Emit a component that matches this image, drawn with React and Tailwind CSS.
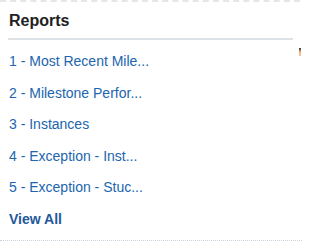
import React from "react";

const items = [
  "1 - Most Recent Mile...",
  "2 - Milestone Perfor...",
  "3 - Instances",
  "4 - Exception - Inst...",
  "5 - Exception - Stuc...",
];

export default function App() {
  return (
    <div className="w-[302px] h-[242px] bg-white relative overflow-hidden" style={{ fontFamily: '"Liberation Sans", Arial, sans-serif' }}>
      <div className="h-[2px] w-[300px] border-t-2 border-dashed border-[#e4e7ea]" />
      <div className="pl-[9px] pr-[9px]">
        <div className="h-[36px] flex items-center pt-[2px]">
          <span className="text-[16px] font-bold text-[#222]">Reports</span>
        </div>
        <div className="h-[2px] bg-[#dde2e6] w-[285px] -ml-[1px]" />
        <ul className="pt-[6px]">
          {items.map((t) => (
            <li key={t} className="h-[31.5px] flex items-center text-[14px] text-[#2165ae]">{t}</li>
          ))}
          <li className="h-[31.5px] flex items-center text-[14px] font-bold text-[#24589c]">View All</li>
        </ul>
      </div>
      <div className="absolute left-0 bottom-[1px] w-[302px] border-t border-dotted border-[#c9d3dc]" />
      <div className="absolute left-[299px] top-[48px] w-[2px] h-[8px] bg-gradient-to-b from-[#333] via-[#f2b27a] to-[#f6c9a0]" />
    </div>
  );
}
